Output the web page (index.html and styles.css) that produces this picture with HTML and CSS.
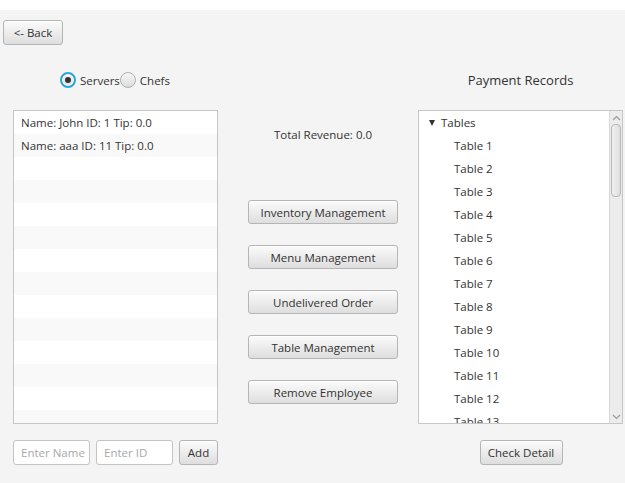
FILE: index.html
```html
<!DOCTYPE html>
<html>
<head>
<meta charset="utf-8">
<link rel="stylesheet" href="styles.css">
</head>
<body>
<div class="titlebar"></div>
<div class="toolbar"><button class="btn back">&lt;- Back</button></div>
<div class="main">
  <div class="col left">
    <div class="radios">
      <label class="radio"><span class="dot on"></span>Servers</label>
      <label class="radio"><span class="dot"></span>Chefs</label>
    </div>
    <div class="list">
      <div class="row">Name: John ID: 1 Tip: 0.0</div>
      <div class="row">Name: aaa ID: 11 Tip: 0.0</div>
      <div class="row"></div><div class="row"></div><div class="row"></div><div class="row"></div>
      <div class="row"></div><div class="row"></div><div class="row"></div><div class="row"></div>
      <div class="row"></div><div class="row"></div><div class="row"></div><div class="row"></div>
    </div>
    <div class="inputs">
      <input class="field name" placeholder="Enter Name">
      <input class="field id" placeholder="Enter ID">
      <button class="btn add">Add</button>
    </div>
  </div>
  <div class="col middle">
    <div class="revenue">Total Revenue: 0.0</div>
    <div class="actions">
      <button class="btn wide">Inventory Management</button>
      <button class="btn wide">Menu Management</button>
      <button class="btn wide">Undelivered Order</button>
      <button class="btn wide">Table Management</button>
      <button class="btn wide">Remove Employee</button>
    </div>
  </div>
  <div class="col right">
    <div class="title">Payment Records</div>
    <div class="tree">
      <div class="tree-items">
        <div class="node root"><span class="arrow"></span>Tables</div>
        <div class="node">Table 1</div>
        <div class="node">Table 2</div>
        <div class="node">Table 3</div>
        <div class="node">Table 4</div>
        <div class="node">Table 5</div>
        <div class="node">Table 6</div>
        <div class="node">Table 7</div>
        <div class="node">Table 8</div>
        <div class="node">Table 9</div>
        <div class="node">Table 10</div>
        <div class="node">Table 11</div>
        <div class="node">Table 12</div>
        <div class="node">Table 13</div>
      </div>
      <div class="scrollbar">
        <svg class="sarrow" width="9" height="6" viewBox="0 0 9 6"><path d="M1 5 L4.5 1.5 L8 5" fill="none" stroke="#9a9a9a" stroke-width="1.2"/></svg>
        <div class="track"><div class="thumb"></div></div>
        <svg class="sarrow" width="9" height="6" viewBox="0 0 9 6"><path d="M1 1 L4.5 4.5 L8 1" fill="none" stroke="#9a9a9a" stroke-width="1.2"/></svg>
      </div>
    </div>
    <div class="check"><button class="btn">Check Detail</button></div>
  </div>
</div>
</body>
</html>
```

FILE: styles.css
```css
* { box-sizing: border-box; }
html, body { margin: 0; padding: 0; }
body {
  width: 625px;
  height: 483px;
  overflow: hidden;
  background: #f4f4f4;
  font-family: "Open Sans", "Noto Sans", sans-serif;
  font-size: 11.5px;
  color: #333;
}
.titlebar { height: 10px; background: #fff; }
.toolbar { padding: 10px 0 0 3px; height: 60px; }
.btn {
  font-family: inherit;
  font-size: 11.5px;
  color: #333;
  height: 25px;
  padding: 0 8px;
  border: 1px solid #b5b5b5;
  border-radius: 3px;
  background: linear-gradient(to bottom, #fbfbfb, #dedede);
  box-shadow: inset 0 1px 0 #ffffff;
  cursor: default;
}
.back { width: 60px; }
.main { display: flex; padding-left: 13px; }
.col { display: flex; flex-direction: column; }
.left { width: 205px; }
.middle { width: 150px; margin-left: 30px; align-items: center; }
.right { width: 205px; margin-left: 20px; }

.radios { height: 20px; display: flex; align-items: center; padding-left: 47px; margin-bottom: 20px; }
.radio { display: flex; align-items: center; }
.dot {
  width: 16px; height: 16px; border-radius: 50%;
  border: 1px solid #b0b0b0;
  background: linear-gradient(to bottom, #f8f8f8, #dcdcdc);
  margin-right: 4px;
  position: relative;
}
.dot.on { border: 2px solid #2ba4dc; box-shadow: inset 0 0 0 1px #ffffff; }
.dot.on::after {
  content: ""; position: absolute; left: 3px; top: 3px;
  width: 6px; height: 6px; border-radius: 50%; background: #333;
}

.list {
  height: 314px;
  border: 1px solid #c6c6c6;
  background: #fff;
  overflow: hidden;
}
.row { height: 23px; line-height: 23px; padding-left: 7px; background: #fff; }
.row:nth-child(even) { background: #f9f9f9; }

.inputs { display: flex; margin-top: 16px; gap: 6px; }
.field {
  height: 25px; width: 77px;
  border: 1px solid #c4c4c4; border-radius: 3px;
  background: #fff;
  font-family: inherit; font-size: 11.5px;
  padding: 0 1px 0 7px;
  color: #333;
}
.field::placeholder { color: #a8a8a8; }
.add { width: 39px; padding: 0; }

.revenue { margin-top: 57px; height: 16px; line-height: 16px; }
.actions { margin-top: 57px; display: flex; flex-direction: column; gap: 21px; }
.wide { width: 150px; height: 24px; }

.title { height: 20px; line-height: 20px; text-align: center; font-size: 13px; margin-bottom: 20px; padding-left: 0; }
.tree {
  height: 314px;
  border: 1px solid #c6c6c6;
  background: #fff;
  display: flex;
  overflow: hidden;
}
.tree-items { flex: 1; overflow: hidden; }
.node { height: 23px; line-height: 23px; padding-left: 35px; white-space: nowrap; }
.node.root { padding-left: 10px; display: flex; align-items: center; }
.arrow {
  width: 0; height: 0;
  border-left: 3.5px solid transparent; border-right: 3.5px solid transparent;
  border-top: 6px solid #333;
  margin-right: 6px;
}
.scrollbar {
  width: 13px;
  background: #ececec;
  border-left: 1px solid #d8d8d8;
  display: flex; flex-direction: column; align-items: center;
}
.sarrow { margin: 4px 0 3px; flex: none; }
.track { flex: 1; width: 100%; padding: 0 1px; }
.thumb {
  height: 73px;
  border: 1px solid #b8b8b8;
  border-radius: 4px;
  background: linear-gradient(to right, #f0f0f0, #dedede);
}
.check { display: flex; justify-content: center; margin-top: 16px; padding-left: 1px; }
.check .btn { width: 83px; padding: 0; }
```
